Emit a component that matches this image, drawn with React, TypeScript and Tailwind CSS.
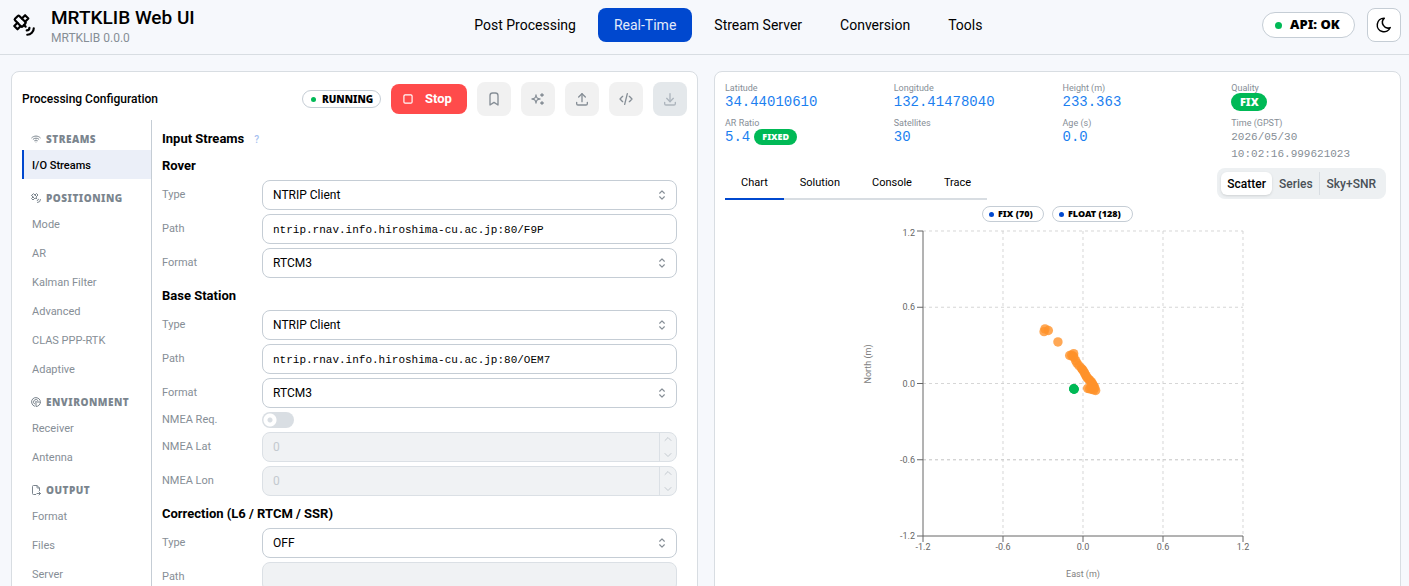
import type { ReactNode } from "react";
import {
  TbBookmark,
  TbChevronDown,
  TbChevronUp,
  TbCode,
  TbDownload,
  TbFileExport,
  TbMoon,
  TbPlayerStop,
  TbRadar,
  TbSatellite,
  TbSelector,
  TbSparkles,
  TbUpload,
  TbWifi,
} from "react-icons/tb";
import clsx from "clsx";

const navItems = ["Post Processing", "Real-Time", "Stream Server", "Conversion", "Tools"];

const sidebarSections = [
  { title: "Streams", icon: TbWifi, items: ["I/O Streams"] },
  {
    title: "Positioning",
    icon: TbSatellite,
    items: ["Mode", "AR", "Kalman Filter", "Advanced", "CLAS PPP-RTK", "Adaptive"],
  },
  { title: "Environment", icon: TbRadar, items: ["Receiver", "Antenna"] },
  { title: "Output", icon: TbFileExport, items: ["Format", "Files", "Server"] },
];

const toolbarActions = [
  { label: "Presets", icon: TbBookmark },
  { label: "Suggest", icon: TbSparkles },
  { label: "Import", icon: TbUpload },
  { label: "View source", icon: TbCode },
];

// east, north in metres
const floatPoints = [
  [-0.285, 0.43],
  [-0.292, 0.408],
  [-0.26, 0.417],
  [-0.188, 0.327],
  [-0.1, 0.22],
  [-0.085, 0.222],
  [-0.07, 0.235],
  [-0.075, 0.215],
  [-0.068, 0.205],
  [-0.055, 0.18],
  [-0.045, 0.16],
  [-0.03, 0.14],
  [-0.012, 0.12],
  [-0.005, 0.11],
  [0.002, 0.1],
  [0.01, 0.088],
  [0.015, 0.075],
  [0.022, 0.062],
  [0.028, 0.05],
  [0.037, 0.04],
  [0.045, 0.03],
  [0.053, 0.022],
  [0.06, 0.015],
  [0.067, 0.005],
  [0.072, -0.005],
  [0.075, -0.015],
  [0.082, -0.02],
  [0.088, -0.035],
  [0.095, -0.055],
  [0.035, -0.038],
  [0.05, -0.042],
  [0.06, -0.03],
  [0.065, -0.045],
  [0.08, -0.05],
];

const fixPoints = [
  [-0.068, -0.043],
  [-0.07, -0.041],
  [-0.066, -0.045],
];

const ticks = [-1.2, -0.6, 0, 0.6, 1.2];
const toX = (east: number) => 231 + (east / 2.4) * 320;
const toY = (north: number) => 161.5 - (north / 2.4) * 305;

function Pill({ children, className, dot }: { children: ReactNode; className: string; dot: string }) {
  return (
    <span
      className={clsx(
        "inline-flex items-center rounded-full border border-[#c5cdd5] bg-white font-['Noto_Sans',sans-serif] font-black whitespace-nowrap",
        className,
      )}
    >
      <span className={clsx("shrink-0 rounded-full", dot)} />
      {children}
    </span>
  );
}

function Header() {
  return (
    <header className="flex h-[55px] items-center justify-between border-b border-[#d8dde2] pr-2 pb-1 pl-[11px]">
      <div className="flex items-center gap-3.5">
        <TbSatellite className="size-[26px]" />
        <div className="pt-0.5">
          <h1 className="text-[19px] leading-6 font-medium">MRTKLIB Web UI</h1>
          <p className="text-xs leading-4 text-[#868e96]">MRTKLIB 0.0.0</p>
        </div>
      </div>
      <nav className="flex gap-1.5">
        {navItems.map((item) => (
          <button
            key={item}
            type="button"
            className={clsx(
              "h-[34px] rounded-lg px-4 text-sm",
              item === "Real-Time" && "bg-[#0048cf] text-[#e3ebfa]",
            )}
          >
            {item}
          </button>
        ))}
      </nav>
      <div className="flex items-center gap-3">
        <Pill className="h-[26px] w-[93px] gap-2 pl-3 text-[13px]" dot="size-[7px] bg-[#00b956]">
          API: OK
        </Pill>
        <button
          type="button"
          aria-label="Toggle color scheme"
          className="flex size-[34px] items-center justify-center rounded-lg border border-[#c5cdd5] bg-white"
        >
          <TbMoon className="size-[18px]" />
        </button>
      </div>
    </header>
  );
}

function Sidebar() {
  return (
    <aside className="flex w-[130px] shrink-0 flex-col border-r border-[#c5cdd5]">
      {sidebarSections.map(({ title, icon: Icon, items }) => (
        <section key={title}>
          <h3 className="flex h-[30px] items-center gap-1 pt-2 pl-2 font-['Noto_Sans',sans-serif] text-[10px] font-black tracking-wider text-[#7b858e] uppercase">
            <Icon className="size-3" />
            {title}
          </h3>
          {items.map((item) => (
            <button
              key={item}
              type="button"
              className={clsx(
                "flex h-[29px] w-full items-center border-l-2 pt-[3px] pl-2 text-left text-[11px]",
                item === "I/O Streams"
                  ? "border-[#0048cf] bg-[#ebeff8] font-medium"
                  : "border-transparent text-[#868e96]",
              )}
            >
              {item}
            </button>
          ))}
        </section>
      ))}
    </aside>
  );
}

function Row({ id, label, children }: { id: string; label: string; children: ReactNode }) {
  return (
    <div className="grid grid-cols-[100px_1fr] items-center">
      <label htmlFor={id} className="text-[11px] leading-4 text-[#868e96]">
        {label}
      </label>
      {children}
    </div>
  );
}

function SelectRow({ id, label, value }: { id: string; label: string; value: string }) {
  return (
    <Row id={id} label={label}>
      <div className="grid items-center">
        <select
          id={id}
          defaultValue={value}
          className="col-start-1 row-start-1 h-[30px] appearance-none rounded-lg border border-[#c5cdd5] bg-white px-2.5 text-xs"
        >
          <option>{value}</option>
        </select>
        <TbSelector className="pointer-events-none col-start-1 row-start-1 mr-2 size-3.5 justify-self-end text-[#868e96]" />
      </div>
    </Row>
  );
}

function TextRow({ id, label, value, disabled }: { id: string; label: string; value: string; disabled?: boolean }) {
  return (
    <Row id={id} label={label}>
      <input
        id={id}
        type="text"
        defaultValue={value}
        disabled={disabled}
        className="h-[30px] w-full rounded-lg border border-[#c5cdd5] bg-white px-2.5 pt-0.5 font-['Liberation_Mono',monospace] text-[11px] disabled:border-[#dbe0e5] disabled:bg-[#f0f2f4]"
      />
    </Row>
  );
}

function NumberRow({ id, label }: { id: string; label: string }) {
  return (
    <Row id={id} label={label}>
      <div className="flex h-[30px] overflow-hidden rounded-lg border border-[#dbe0e5] bg-[#f0f2f4] text-[#c3c9cf]">
        <input id={id} type="text" inputMode="numeric" defaultValue="0" disabled className="min-w-0 flex-1 px-2.5 text-xs" />
        <div className="flex w-[17px] flex-col items-center justify-between border-l border-[#dbe0e5]">
          <button type="button" disabled aria-label={`Increase ${label}`}>
            <TbChevronUp className="size-3" />
          </button>
          <button type="button" disabled aria-label={`Decrease ${label}`}>
            <TbChevronDown className="size-3" />
          </button>
        </div>
      </div>
    </Row>
  );
}

function StreamHeading({ children }: { children: ReactNode }) {
  return <h4 className="mt-1 h-5 text-[13px] leading-5 font-bold">{children}</h4>;
}

function StreamsForm() {
  return (
    <div className="flex min-w-0 flex-1 flex-col gap-1 px-2.5 pt-2">
      <h3 className="flex h-5 items-center gap-2.5 pt-0.5 text-[13px] font-bold">
        Input Streams
        <span className="text-[10px] font-medium text-[#a6bff0]">?</span>
      </h3>
      <StreamHeading>Rover</StreamHeading>
      <SelectRow id="rover-type" label="Type" value="NTRIP Client" />
      <TextRow id="rover-path" label="Path" value="ntrip.rnav.info.hiroshima-cu.ac.jp:80/F9P" />
      <SelectRow id="rover-format" label="Format" value="RTCM3" />
      <StreamHeading>Base Station</StreamHeading>
      <SelectRow id="base-type" label="Type" value="NTRIP Client" />
      <TextRow id="base-path" label="Path" value="ntrip.rnav.info.hiroshima-cu.ac.jp:80/OEM7" />
      <SelectRow id="base-format" label="Format" value="RTCM3" />
      <Row id="nmea-req" label="NMEA Req.">
        <input
          id="nmea-req"
          type="checkbox"
          role="switch"
          disabled
          className="h-4 w-8 appearance-none rounded-full bg-[#d9dee3] bg-[radial-gradient(circle_at_8px_8px,#d9dee3_2px,#fff_3px,#fff_6px,#d9dee3_7px)]"
        />
      </Row>
      <NumberRow id="nmea-lat" label="NMEA Lat" />
      <NumberRow id="nmea-lon" label="NMEA Lon" />
      <StreamHeading>Correction (L6 / RTCM / SSR)</StreamHeading>
      <SelectRow id="corr-type" label="Type" value="OFF" />
      <TextRow id="corr-path" label="Path" value="" disabled />
    </div>
  );
}

function ConfigPanel() {
  return (
    <section className="rounded-lg border border-[#d8dde2] bg-white p-2.5">
      <div className="flex items-center gap-2.5">
        <h2 className="mr-auto text-xs font-medium">Processing Configuration</h2>
        <Pill className="h-[18px] w-[79px] gap-1.5 pl-2 text-[10px]" dot="size-[5px] bg-[#00b956]">
          RUNNING
        </Pill>
        <button
          type="button"
          className="flex h-[30px] w-[76px] items-center gap-2.5 rounded-lg bg-[#ff4b4b] pl-2.5 text-[13px] font-bold text-white"
        >
          <TbPlayerStop className="size-3.5" />
          Stop
        </button>
        {toolbarActions.map(({ label, icon: Icon }) => (
          <button
            key={label}
            type="button"
            aria-label={label}
            className="flex size-[34px] items-center justify-center rounded-lg bg-[#f1f1f1] text-[#868e96]"
          >
            <Icon className="size-4" />
          </button>
        ))}
        <button
          type="button"
          disabled
          aria-label="Export"
          className="flex size-[34px] items-center justify-center rounded-lg bg-[#e4e8eb] text-[#adb5bd]"
        >
          <TbDownload className="size-4" />
        </button>
      </div>
      <div className="mt-1 flex">
        <Sidebar />
        <StreamsForm />
      </div>
    </section>
  );
}

function Stat({ label, children }: { label: string; children: ReactNode }) {
  return (
    <div>
      <dt className="text-[9px] leading-3 text-[#868e96]">{label}</dt>
      <dd className="flex min-h-4 items-center gap-1 font-['Liberation_Mono',monospace] text-sm leading-4 text-[#1c7ff0]">
        {children}
      </dd>
    </div>
  );
}

function SolidBadge({ children, className }: { children: ReactNode; className: string }) {
  return (
    <span
      className={clsx(
        "flex items-center justify-center rounded-full bg-[#00b956] font-['Noto_Sans',sans-serif] font-black text-white",
        className,
      )}
    >
      {children}
    </span>
  );
}

function ScatterChart() {
  return (
    <svg
      viewBox="0 0 411 370"
      className="mx-auto h-[370px] w-[411px] font-[Roboto,sans-serif] text-[9px]"
      role="img"
      aria-label="East/North scatter"
    >
      <g stroke="#ccc" strokeOpacity="0.8" strokeDasharray="3 3">
        {ticks.slice(1).map((t) => (
          <g key={t}>
            <line x1={toX(t)} x2={toX(t)} y1={toY(1.2)} y2={toY(-1.2)} />
            <line x1={toX(-1.2)} x2={toX(1.2)} y1={toY(t)} y2={toY(t)} />
          </g>
        ))}
        <line x1={toX(-1.2)} x2={toX(1.2)} y1={toY(-0.6)} y2={toY(-0.6)} />
      </g>
      <g stroke="#666">
        <line x1={toX(-1.2)} x2={toX(-1.2)} y1={toY(1.2)} y2={toY(-1.2)} />
        <line x1={toX(-1.2)} x2={toX(1.2)} y1={toY(-1.2)} y2={toY(-1.2)} />
        {ticks.map((t) => (
          <g key={t}>
            <line x1={toX(t)} x2={toX(t)} y1={toY(-1.2)} y2={toY(-1.2) + 6} />
            <line x1={toX(-1.2) - 6} x2={toX(-1.2)} y1={toY(t)} y2={toY(t)} />
          </g>
        ))}
      </g>
      <g fill="#666">
        {ticks.map((t) => (
          <g key={t}>
            <text x={toX(t)} y={toY(-1.2) + 14} textAnchor="middle">
              {t.toFixed(1)}
            </text>
            <text x={toX(-1.2) - 8} y={toY(t) + (t === 1.2 ? 5 : 3)} textAnchor="end">
              {t.toFixed(1)}
            </text>
          </g>
        ))}
      </g>
      <g fill="#808080" textAnchor="middle">
        <text x={toX(0)} y={355}>
          East (m)
        </text>
        <text transform="translate(19 142) rotate(-90)">North (m)</text>
      </g>
      <g fill="#ff922b" fillOpacity="0.8">
        {floatPoints.map(([e, n]) => (
          <circle key={`${e},${n}`} cx={toX(e)} cy={toY(n)} r="4.7" />
        ))}
      </g>
      <g fill="#00b956">
        {fixPoints.map(([e, n]) => (
          <circle key={`${e},${n}`} cx={toX(e)} cy={toY(n)} r="4.7" />
        ))}
      </g>
    </svg>
  );
}

function MonitorPanel() {
  return (
    <section className="rounded-lg border border-[#d8dde2] bg-white p-2.5">
      <dl className="grid grid-cols-4 gap-x-2.5 gap-y-[7px]">
        <Stat label="Latitude">34.44010610</Stat>
        <Stat label="Longitude">132.41478040</Stat>
        <Stat label="Height (m)">233.363</Stat>
        <Stat label="Quality">
          <SolidBadge className="-my-px h-[18px] w-9 text-[11px]">FIX</SolidBadge>
        </Stat>
        <Stat label="AR Ratio">
          5.4
          <SolidBadge className="h-4 w-[43px] text-[9px]">FIXED</SolidBadge>
        </Stat>
        <Stat label="Satellites">30</Stat>
        <Stat label="Age (s)">0.0</Stat>
        <Stat label="Time (GPST)">
          <span className="text-[11px] leading-[17px] text-[#868e96]">
            2026/05/30
            <br />
            10:02:16.999621023
          </span>
        </Stat>
      </dl>
      <div className="mt-[5px] flex items-start justify-between pr-1">
        <div role="tablist" className="flex">
          {["Chart", "Solution", "Console", "Trace"].map((tab) => (
            <button
              key={tab}
              type="button"
              role="tab"
              aria-selected={tab === "Chart"}
              className={clsx(
                "h-8 border-b-2 px-4 text-[11px]",
                tab === "Chart" ? "border-[#0048cf]" : "border-[#d8dde2]",
              )}
            >
              {tab}
            </button>
          ))}
        </div>
        <div className="flex h-[31px] items-center gap-px rounded-lg bg-[#edf0f2] p-1 text-xs font-medium text-[#495057]">
          <button type="button" className="h-[23px] rounded-md bg-white px-1.5 text-black shadow-sm">
            Scatter
          </button>
          <button type="button" className="h-[23px] border-r border-[#d8dde2] px-1.5">
            Series
          </button>
          <button type="button" className="h-[23px] px-1.5">
            Sky+SNR
          </button>
        </div>
      </div>
      <div className="mt-1.5 flex justify-center gap-2">
        <Pill className="h-4 w-[62px] gap-1 pl-1.5 text-[9px]" dot="size-[5px] bg-[#0048cf]">
          FIX (70)
        </Pill>
        <Pill className="h-4 w-[81px] gap-1 pl-1.5 text-[9px]" dot="size-[5px] bg-[#0048cf]">
          FLOAT (128)
        </Pill>
      </div>
      <ScatterChart />
    </section>
  );
}

export default function App() {
  return (
    <div className="h-screen overflow-hidden bg-[#f6f8fc] font-[Roboto,sans-serif] text-black">
      <Header />
      <main className="grid grid-cols-2 gap-4 pt-4 pr-2 pl-[11px]">
        <ConfigPanel />
        <MonitorPanel />
      </main>
    </div>
  );
}
